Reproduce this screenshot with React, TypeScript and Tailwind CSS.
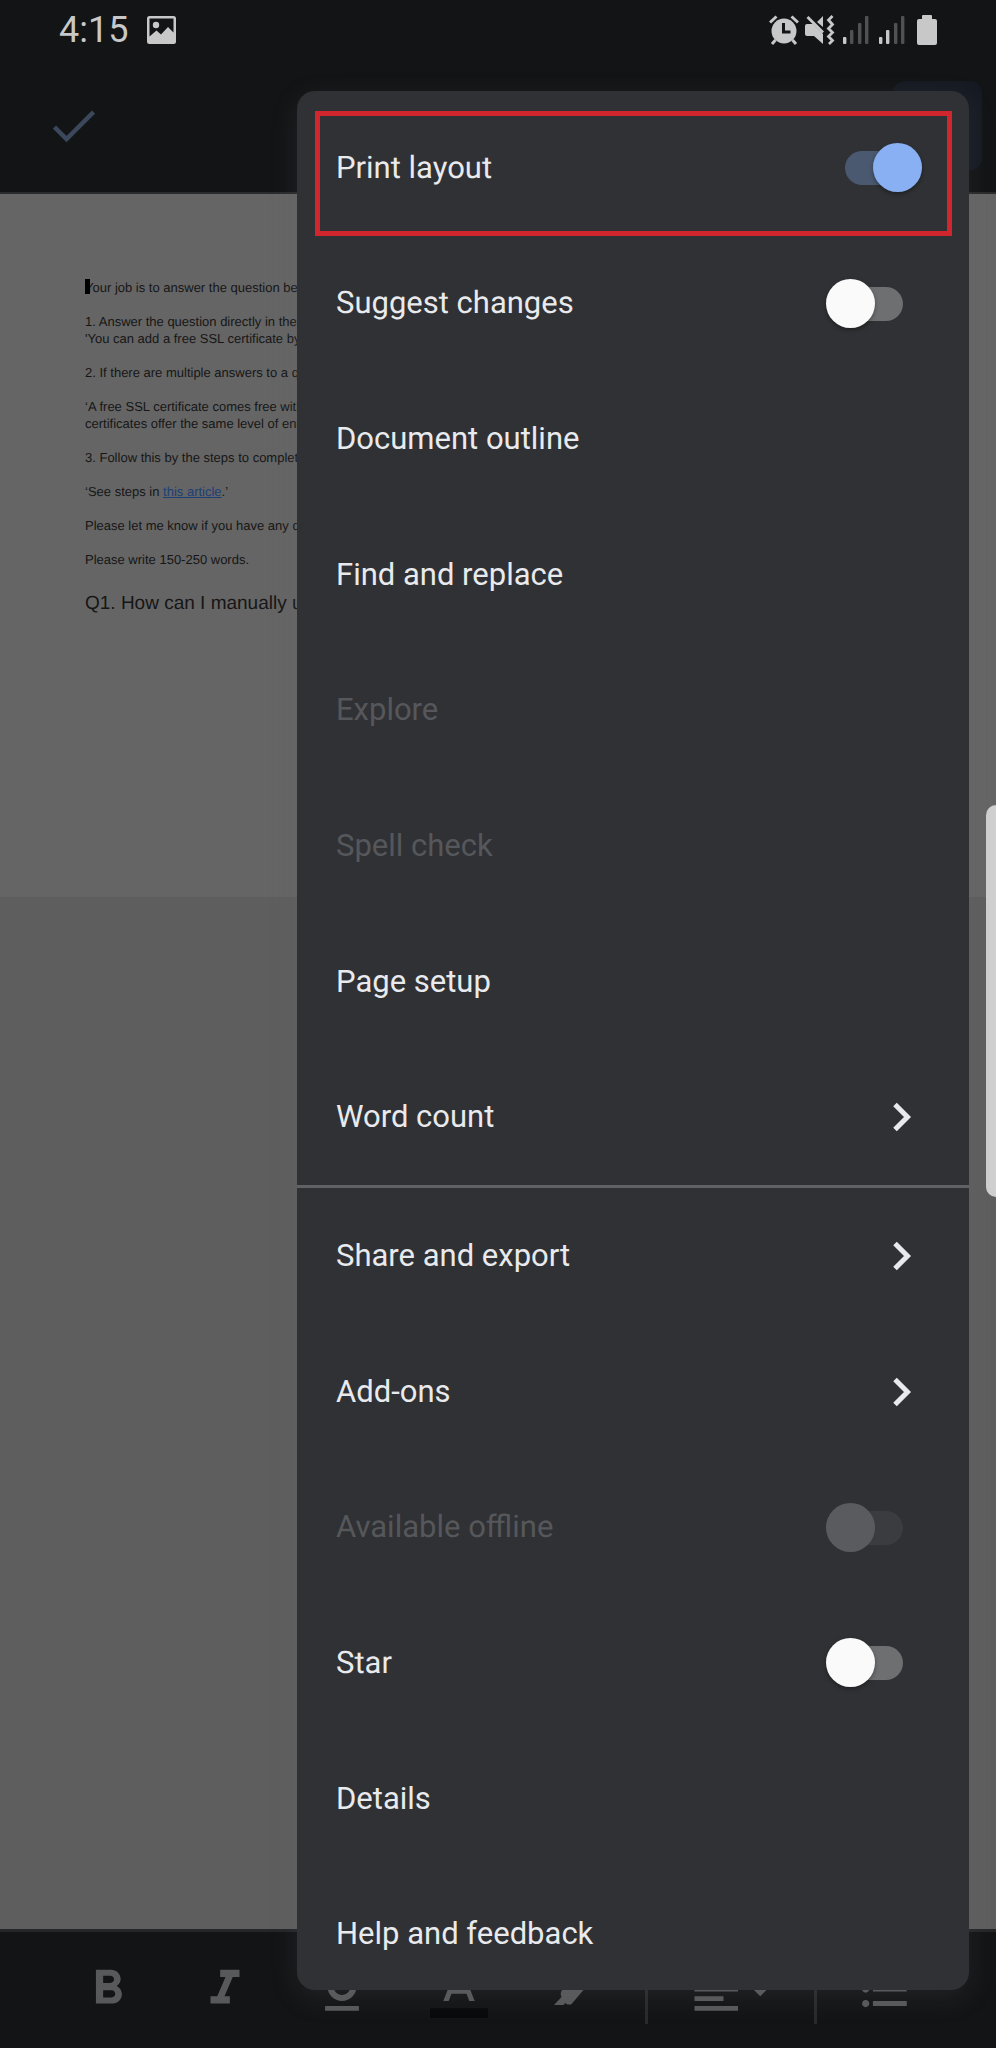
import type { ReactNode } from "react";

type Item = {
  label: string;
  kind?: "switch" | "submenu";
  on?: boolean;
  disabled?: boolean;
};

const viewItems: Item[] = [
  { label: "Print layout", kind: "switch", on: true },
  { label: "Suggest changes", kind: "switch" },
  { label: "Document outline" },
  { label: "Find and replace" },
  { label: "Explore", disabled: true },
  { label: "Spell check", disabled: true },
  { label: "Page setup" },
  { label: "Word count", kind: "submenu" },
];

const fileItems: Item[] = [
  { label: "Share and export", kind: "submenu" },
  { label: "Add-ons", kind: "submenu" },
  { label: "Available offline", kind: "switch", disabled: true },
  { label: "Star", kind: "switch" },
  { label: "Details" },
  { label: "Help and feedback" },
];

function Chevron() {
  return (
    <svg viewBox="0 0 20 30" className="mr-[57px] h-[30px] w-5" fill="none" stroke="#e8eaed" strokeWidth="5">
      <path d="M3 2.5 15.5 15 3 27.5" />
    </svg>
  );
}

function Switch({ id, on, disabled }: { id: string; on?: boolean; disabled?: boolean }) {
  const base =
    "relative h-[49px] w-[77px] shrink-0 appearance-none before:absolute before:top-2 before:h-[34px] before:w-[68px] before:rounded-full after:absolute after:top-0 after:size-[49px] after:rounded-full";
  const look = disabled
    ? "mr-[66px] before:right-0 before:bg-[#3b3c3f] after:left-0 after:bg-[#5a5b5e]"
    : on
      ? "mr-[47px] before:left-0 before:bg-[#4a5970] after:right-0 after:bg-[#8ab0f4] after:shadow-[0_2px_4px_rgba(0,0,0,0.35)]"
      : "mr-[66px] before:right-0 before:bg-[#6e6f71] after:left-0 after:bg-[#fafafa] after:shadow-[0_2px_4px_rgba(0,0,0,0.35)]";
  return <input id={id} type="checkbox" role="switch" defaultChecked={on} disabled={disabled} className={`${base} ${look}`} />;
}

function MenuRow({ item }: { item: Item }) {
  const tone = item.disabled ? "text-[#56575b]" : "text-[#e8eaed]";
  if (item.kind === "switch") {
    const id = item.label.toLowerCase().replace(/ /g, "-");
    return (
      <div className={`flex min-h-0 flex-1 items-center pl-[39px] ${tone}`}>
        <label htmlFor={id} className="flex-1">
          {item.label}
        </label>
        <Switch id={id} on={item.on} disabled={item.disabled} />
      </div>
    );
  }
  return (
    <button type="button" disabled={item.disabled} className={`flex min-h-0 flex-1 items-center justify-between pl-[39px] text-left ${tone}`}>
      {item.label}
      {item.kind === "submenu" && <Chevron />}
    </button>
  );
}

function Signal({ level }: { level: number }) {
  const bars = [
    { x: 0, y: 22 },
    { x: 7, y: 15 },
    { x: 15, y: 8 },
    { x: 22, y: 1 },
  ];
  return (
    <svg viewBox="0 0 26 30" className="h-[30px] w-[26px]">
      {bars.map((b, i) => (
        <rect key={b.x} x={b.x} y={b.y} width="3.4" height={29 - b.y} rx="1" fill={i < level ? "#c8c8c8" : "#505152"} />
      ))}
    </svg>
  );
}

function StatusBar() {
  return (
    <div className="flex h-[60px] items-center pr-[59px] pl-[59px] text-[#c8c8c8]">
      <span className="text-[36px] leading-[60px]">4:15</span>
      <svg viewBox="0 0 29 28" className="ml-[19px] h-7 w-[29px]" fill="currentColor">
        <path
          fillRule="evenodd"
          d="M2.5 0h24A2.500 2.500 0 0 1 29 2.500v23a2.500 2.500 0 0 1-2.500 2.500h-24A2.500 2.500 0 0 1 0 25.500v-23A2.500 2.500 0 0 1 2.500 0ZM2.500 2.500V20.500L9.500 14.500 14 18.500 21 11 26.500 16.500V2.500Z"
        />
        <circle cx="9" cy="9" r="3.200" />
      </svg>
      <div className="ml-auto flex items-center">
        <svg viewBox="0 0 30 30" className="h-[30px] w-[30px]" fill="none" stroke="currentColor">
          <circle cx="15" cy="16" r="12.500" fill="currentColor" stroke="none" />
          <path strokeWidth="3" d="M1 7.500 7.500 1.500M29 7.500 22.500 1.500M6.500 25 3 29M23.500 25 27 29" />
          <path stroke="#141517" strokeWidth="3" d="M14.500 8v9h7" />
        </svg>
        <svg viewBox="0 0 30 30" className="ml-1.5 h-[30px] w-[30px]" fill="currentColor">
          <path d="M0 11Q0 9 2 9H8L18 19V29L9 21H2Q0 21 0 19ZM12 7 18 1V12Z" />
          <path d="M2.500 2 18 17.500" fill="none" stroke="currentColor" strokeWidth="2.800" />
          <path d="M27.500 1 23.500 5 27.500 9.500 23.500 13.500 27.500 17.500 23.500 21.500 27.500 25.500 24 29" fill="none" stroke="currentColor" strokeWidth="2.800" />
        </svg>
        <div className="ml-2 flex gap-2.5">
          <Signal level={1} />
          <Signal level={2} />
        </div>
        <svg viewBox="0 0 20 30" className="ml-3 h-[30px] w-5" fill="currentColor">
          <path d="M6 0h8q1 0 1 1v3h3q2 0 2 2v22q0 2-2 2H2q-2 0-2-2V6q0-2 2-2h3V1q0-1 1-1Z" />
        </svg>
      </div>
    </div>
  );
}

function Tool({ label, children }: { label: string; children: ReactNode }) {
  return (
    <button type="button" aria-label={label} className="shrink-0">
      <svg viewBox="0 0 24 24" className="size-[58px]" fill="currentColor">
        {children}
      </svg>
    </button>
  );
}

function Toolbar() {
  return (
    <div className="flex h-[119px] shrink-0 items-start overflow-hidden border-t-[3px] border-[#242628] bg-[#131416] pt-7 pl-[79px] text-[#58595b]">
      <div className="flex gap-[59px]">
        <Tool label="Bold">
          <path d="M15.6 10.79c.97-.67 1.650-1.770 1.650-2.790 0-2.260-1.750-4-4-4H7v14h7.040c2.090 0 3.710-1.700 3.710-3.790 0-1.520-.86-2.820-2.150-3.420zM10 6.500h3c.83 0 1.500.67 1.500 1.500s-.67 1.500-1.500 1.500h-3v-3zm3.500 9H10v-3h3.500c.83 0 1.500.67 1.500 1.500s-.67 1.500-1.500 1.500z" />
        </Tool>
        <Tool label="Italic">
          <path d="M10 4v3h2.210l-3.420 8H6v3h8v-3h-2.210l3.420-8H18V4z" />
        </Tool>
        <Tool label="Underline">
          <path d="M12 17c3.310 0 6-2.690 6-6V3h-2.500v8c0 1.930-1.570 3.500-3.500 3.500S8.500 12.930 8.500 11V3H6v8c0 3.310 2.690 6 6 6zm-7 2v2h14v-2H5z" />
        </Tool>
        <Tool label="Text color">
          <path d="M11 3 5.500 17h2.250l1.120-3h6.250l1.120 3h2.250L13 3h-2zm-1.380 9L12 5.670 14.380 12H9.620z" />
          <path fill="#08090a" d="M0 20h24v4H0z" />
        </Tool>
        <Tool label="Highlight">
          <path d="M2.900 18.600 6 15.300Q5.200 13.700 6.300 12.400L14.500 3.500 20.500 8.500 15 12.500 10 18.400H8.300L7.600 17.800 6.800 18.600Z" />
        </Tool>
      </div>
      <div className="ml-10 h-[64px] w-[3px] shrink-0 bg-[#292a2c]" />
      <button type="button" aria-label="Alignment" className="ml-[39px] shrink-0">
        <svg viewBox="0 0 42 24" className="h-[58px] w-[102px]" fill="currentColor">
          <path d="M15 15H3v2h12v-2zm0-8H3v2h12V7zM3 13h18v-2H3v2zm0 8h18v-2H3v2zM3 3v2h18V3H3z" />
          <path d="M25.200 10 30.200 15 35.200 10z" />
        </svg>
      </button>
      <div className="ml-[25px] h-[64px] w-[3px] shrink-0 bg-[#292a2c]" />
      <div className="ml-[39px]">
        <Tool label="Bulleted list">
          <path d="M4 10.500c-.83 0-1.500.67-1.500 1.500s.67 1.500 1.500 1.500 1.500-.67 1.500-1.500-.67-1.500-1.500-1.500zm0-6c-.83 0-1.500.67-1.500 1.500S3.170 7.500 4 7.500 5.500 6.830 5.500 6 4.830 4.500 4 4.500zm0 12c-.83 0-1.500.68-1.500 1.500s.68 1.500 1.500 1.500 1.500-.68 1.500-1.500-.67-1.500-1.500-1.500zM7 19h14v-2H7v2zm0-6h14v-2H7v2zm0-8v2h14V5H7z" />
        </Tool>
      </div>
    </div>
  );
}

function DocumentPage() {
  return (
    <article className="h-[703px] overflow-hidden bg-[#656565] pt-[85px] pl-[85px] font-['Liberation_Sans',Arial,sans-serif] text-[13px] leading-[17px] whitespace-nowrap text-[#161616] [text-rendering:geometricPrecision]">
      <div className="flex flex-col gap-[17px]">
        <p className="relative">
          <span className="absolute top-0 left-0 h-[15px] w-[5px] bg-black" />
          Your job is to answer the question be
        </p>
        <p>
          1. Answer the question directly in the
          <br />
          'You can add a free SSL certificate by
        </p>
        <p>2. If there are multiple answers to a q</p>
        <p>
          ‘A free SSL certificate comes free with
          <br />
          certificates offer the same level of encr
        </p>
        <p>3. Follow this by the steps to complet</p>
        <p>
          ‘See steps in{" "}
          <a href="#article" className="text-[#1c3f78] underline">
            this article
          </a>
          .’
        </p>
        <p>Please let me know if you have any q</p>
        <p>Please write 150-250 words.</p>
      </div>
      <h2 className="mt-6 text-[19px] leading-6">Q1. How can I manually u</h2>
    </article>
  );
}

export default function App() {
  return (
    <div className="relative flex h-screen min-h-[1200px] flex-col overflow-hidden bg-[#5e5e5e] font-[Roboto,sans-serif]">
      <header className="relative h-[194px] shrink-0 border-b-2 border-[#2a2b2c] bg-[#131416]">
        <StatusBar />
        <div className="flex items-start justify-between pt-[21px] pr-3.5 pl-[53px]">
          <button type="button" aria-label="Done" className="pt-[29px]">
            <svg viewBox="0 0 42 33" className="h-[33px] w-[42px]" fill="none" stroke="#3b475b" strokeWidth="4.500">
              <path d="M1.500 17 13.500 29 40.500 2" />
            </svg>
          </button>
          <button type="button" aria-label="More options" className="size-[89px] rounded-xl bg-[#161b23]" />
        </div>
      </header>
      <main className="min-h-0 flex-1">
        <DocumentPage />
      </main>
      <Toolbar />

      <div className="absolute top-[805px] right-0 h-[392px] w-[10px] rounded-l-[10px] bg-[#d0d0d0]" />

      <nav
        aria-label="Document options"
        className="absolute top-[91px] right-[27px] bottom-[58px] left-[297px] overflow-hidden rounded-[18px] bg-[#303134] text-[31px] leading-9 shadow-[0_8px_28px_rgba(110,112,116,0.16)] [text-rendering:geometricPrecision]"
      >
        <div className="flex h-[calc(100%+12px)] flex-col pt-[9px]">
          <div className="flex min-h-0 flex-[8] flex-col">
            {viewItems.map((item) => (
              <MenuRow key={item.label} item={item} />
            ))}
          </div>
          <hr className="h-[3px] shrink-0 border-0 bg-[#5f6164]" />
          <div className="flex min-h-0 flex-[6] flex-col">
            {fileItems.map((item) => (
              <MenuRow key={item.label} item={item} />
            ))}
          </div>
        </div>
        <div className="pointer-events-none absolute top-5 right-[17px] left-[18px] h-[125px] border-[5px] border-[#d2262e]" />
      </nav>
    </div>
  );
}
